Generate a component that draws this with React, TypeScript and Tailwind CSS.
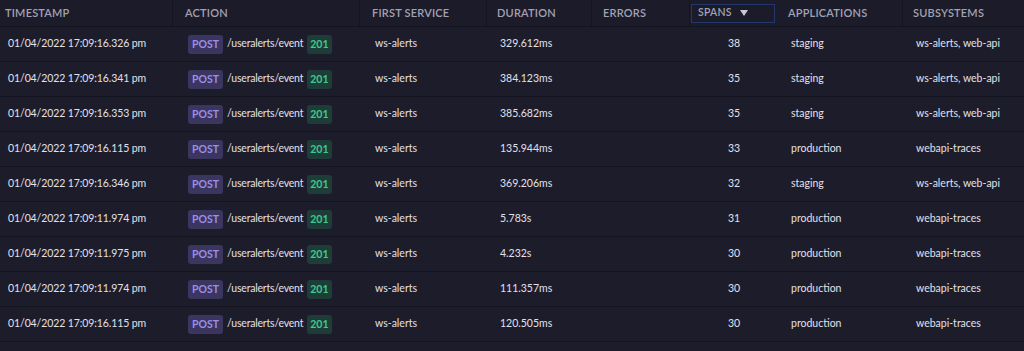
const rows = [
  { ts: "01/04/2022 17:09:16.326 pm", dur: "329.612ms", spans: 38, app: "staging", sub: "ws-alerts, web-api" },
  { ts: "01/04/2022 17:09:16.341 pm", dur: "384.123ms", spans: 35, app: "staging", sub: "ws-alerts, web-api" },
  { ts: "01/04/2022 17:09:16.353 pm", dur: "385.682ms", spans: 35, app: "staging", sub: "ws-alerts, web-api" },
  { ts: "01/04/2022 17:09:16.115 pm", dur: "135.944ms", spans: 33, app: "production", sub: "webapi-traces" },
  { ts: "01/04/2022 17:09:16.346 pm", dur: "369.206ms", spans: 32, app: "staging", sub: "ws-alerts, web-api" },
  { ts: "01/04/2022 17:09:11.974 pm", dur: "5.783s", spans: 31, app: "production", sub: "webapi-traces" },
  { ts: "01/04/2022 17:09:11.975 pm", dur: "4.232s", spans: 30, app: "production", sub: "webapi-traces" },
  { ts: "01/04/2022 17:09:11.974 pm", dur: "111.357ms", spans: 30, app: "production", sub: "webapi-traces" },
  { ts: "01/04/2022 17:09:16.115 pm", dur: "120.505ms", spans: 30, app: "production", sub: "webapi-traces" },
];

const cols = "grid grid-cols-[173px_187px_127px_105px_98px_88px_125px_121px]";

export default function App() {
  return (
    <div className="w-[1024px] h-[351px] overflow-hidden bg-[#1d1c2b] text-[#e2e1ea] font-['Lato',sans-serif]">
      <div className={`${cols} h-[27px] items-stretch border-b border-[#141320] text-[11px] font-semibold tracking-[0.2px] text-[#a3a2b4] bg-[#1c1b2a]`}>
        <div className="flex items-center pl-[5px] border-r border-[#151422]">TIMESTAMP</div>
        <div className="flex items-center pl-[12px] border-r border-[#151422]">ACTION</div>
        <div className="flex items-center pl-[12px] border-r border-[#151422]">FIRST SERVICE</div>
        <div className="flex items-center pl-[10px] border-r border-[#151422]">DURATION</div>
        <div className="flex items-center pl-[11px] border-r border-[#151422]">ERRORS</div>
        <div className="flex items-center pl-[1px] pr-[3px]">
          <div className="flex items-center w-full h-[19px] pl-[6px] border border-[#22386b] text-[10.5px]">
            SPANS
            <svg width="8" height="6" viewBox="0 0 8 6" className="ml-[8px]">
              <path d="M0 0h8L4 6z" fill="#c8c7d6" />
            </svg>
          </div>
        </div>
        <div className="flex items-center pl-[10px] border-r border-[#151422]">APPLICATIONS</div>
        <div className="flex items-center pl-[10px]">SUBSYSTEMS</div>
      </div>
      {rows.map((r, i) => (
        <div key={i} className={`${cols} h-[35px] items-center border-b border-[#141320] text-[10.5px]`}>
          <div className="pl-[8px] tracking-[-0.1px]">{r.ts}</div>
          <div className="pl-[15px] flex items-center">
            <span className="rounded-[3px] bg-[#3a3660] text-[#9b8fe6] font-bold text-[10.5px] px-[4px] h-[19px] leading-[19px]">POST</span>
            <span className="ml-[4px] tracking-[-0.2px]">/useralerts/event</span>
            <span className="ml-[4px] rounded-[3px] bg-[#1e3d39] text-[#3fca8c] font-bold text-[10.5px] px-[3px] h-[19px] leading-[19px]">201</span>
          </div>
          <div className="pl-[15px]">ws-alerts</div>
          <div className="pl-[13px]">{r.dur}</div>
          <div></div>
          <div className="text-center">{r.spans}</div>
          <div className="pl-[13px]">{r.app}</div>
          <div className="pl-[13px]">{r.sub}</div>
        </div>
      ))}
    </div>
  );
}
